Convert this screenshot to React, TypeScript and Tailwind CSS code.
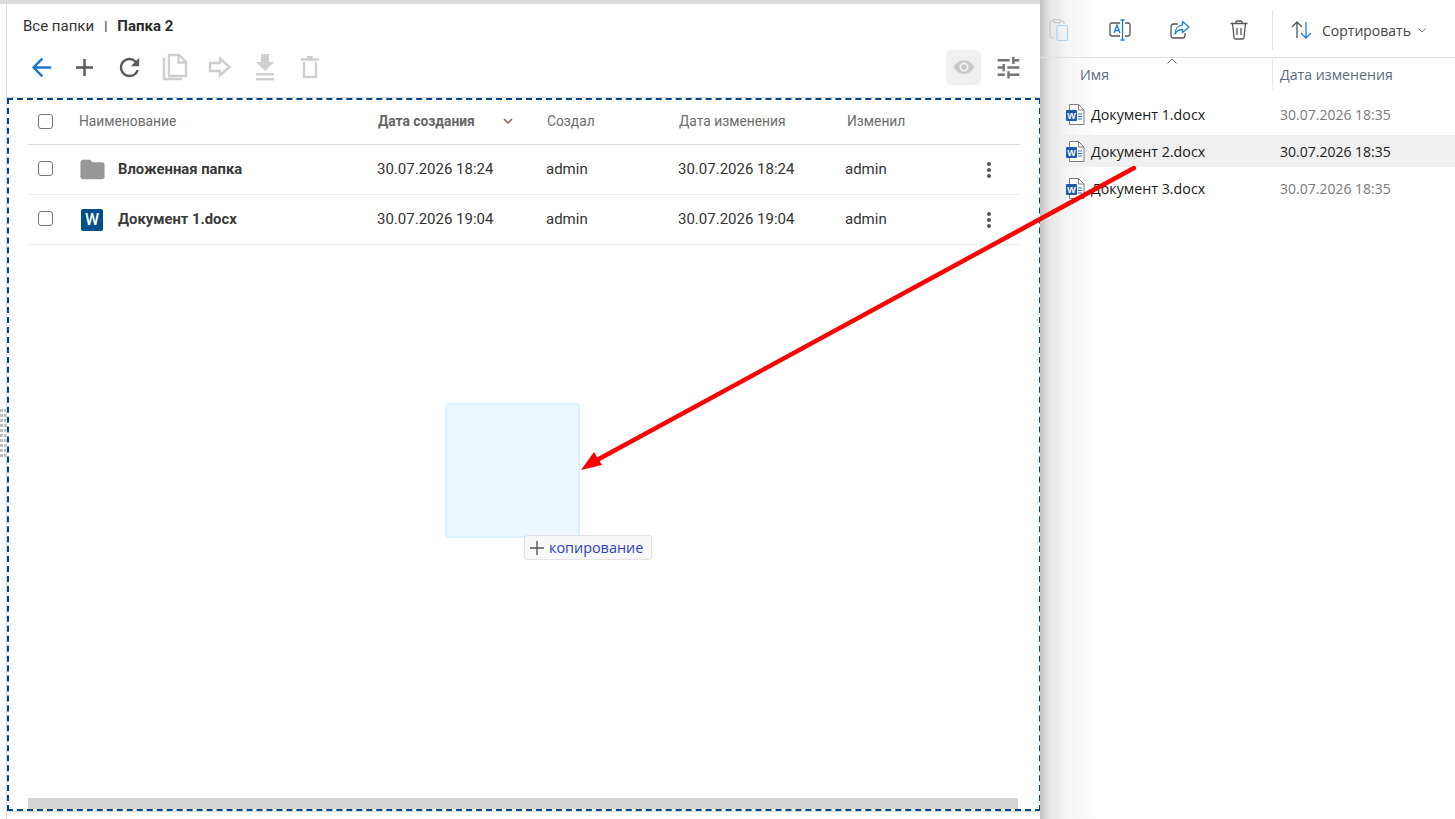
import React from "react";
import { MdArrowBack, MdAdd, MdRefresh, MdVisibility, MdTune, MdMoreVert, MdFolder, MdKeyboardArrowDown } from "react-icons/md";

const left = "font-['Roboto',sans-serif]";
const right = "font-['Open_Sans','Noto_Sans',sans-serif]";

function Check() {
  return <span className="block w-[15px] h-[15px] rounded-[3px] border-[1.5px] border-[#757575] bg-white" />;
}

function CopyIcon() {
  return (
    <svg width="26" height="28" viewBox="0 0 26 28" fill="none" stroke="#cfcfcf" strokeWidth="2.4">
      <path d="M2 5v21h18" />
      <path d="M7 2h10l7 7v14H7z" />
      <path d="M16.5 2v7.5H24" />
    </svg>
  );
}
function ForwardIcon() {
  return (
    <svg width="24" height="22" viewBox="0 0 24 22" fill="none" stroke="#cfcfcf" strokeWidth="2.4">
      <path d="M2 7h10V2.5L21.5 11 12 19.5V15H2z" />
    </svg>
  );
}
function DownloadIcon() {
  return (
    <svg width="20" height="28" viewBox="0 0 20 28" fill="#cfcfcf">
      <path d="M6 1h8v8h5l-9 9-9-9h5z" />
      <rect x="1" y="20" width="18" height="2.4" />
      <rect x="1" y="25" width="18" height="2.4" />
    </svg>
  );
}
function TrashIcon() {
  return (
    <svg width="18" height="23" viewBox="0 0 18 23" fill="none" stroke="#cfcfcf" strokeWidth="2.4">
      <path d="M3 6v15h12V6" />
      <path d="M0 3.5h18M6 1.2h6" />
    </svg>
  );
}
function WordIcon() {
  return (
    <svg width="19" height="21" viewBox="0 0 19 21" fill="none" className="shrink-0">
      <path d="M3.5 .5h9l5.5 5.5v14.5H3.5z" fill="#fff" stroke="#7d7d7d" />
      <path d="M12.5 .5V6H18" stroke="#7d7d7d" />
      <path d="M12 10h4M12 12.5h4M12 15h4" stroke="#2b6cc4" />
      <rect x="0" y="6" width="11" height="11" rx="1" fill="#1f5bb5" />
      <text x="5.5" y="15" fontSize="9" fontWeight="700" textAnchor="middle" fill="#fff" fontFamily="Liberation Sans">W</text>
    </svg>
  );
}
function ClipIcon() {
  return (
    <svg width="20" height="22" viewBox="0 0 20 22" fill="none">
      <path d="M5 19H2.5A1.5 1.5 0 0 1 1 17.5v-14A1.5 1.5 0 0 1 2.5 2H4M12 2h1.5A1.5 1.500 0 0 1 15 3.500V5" stroke="#c8c8c8" strokeWidth="1.2" />
      <rect x="4.5" y=".7" width="7" height="3" rx="1" stroke="#c8c8c8" strokeWidth="1.2" />
      <rect x="8" y="6.5" width="10.5" height="15" rx="1.5" stroke="#a9d3f2" strokeWidth="1.2" />
    </svg>
  );
}
function RenameIcon() {
  return (
    <svg width="22" height="22" viewBox="0 0 22 22" fill="none">
      <path d="M11 4H3a2 2 0 0 0-2 2v9a2 2 0 0 0 2 2h8M16 4h3a2 2 0 0 1 2 2v9a2 2 0 0 1-2 2h-3" stroke="#555" strokeWidth="1.3" />
      <path d="M5 14l3-8 3 8M6 11.5h4" stroke="#1a7fd4" strokeWidth="1.3" />
      <path d="M13.5 1v20M11.5 1h4M11.5 21h4" stroke="#1a7fd4" strokeWidth="1.3" />
    </svg>
  );
}
function ShareIcon() {
  return (
    <svg width="20" height="20" viewBox="0 0 20 20" fill="none">
      <path d="M8 4H3.500A2.500 2.500 0 0 0 1 6.500v9A2.500 2.500 0 0 0 3.500 18h9a2.500 2.500 0 0 0 2.500-2.500V13" stroke="#555" strokeWidth="1.3" />
      <path d="M12.500 1.500 19 7l-6.500 5.500V9.500C9 9.500 6.500 11 5 14c0-5 3-8.500 7.500-8.800z" stroke="#1a7fd4" strokeWidth="1.3" strokeLinejoin="round" />
    </svg>
  );
}
function BinIcon() {
  return (
    <svg width="18" height="20" viewBox="0 0 18 20" fill="none" stroke="#555" strokeWidth="1.3">
      <path d="M.500 3.500h17M6 3.500V2a1 1 0 0 1 1-1h4a1 1 0 0 1 1 1v1.500" />
      <path d="M2.500 3.500 4 17.500a1.500 1.500 0 0 0 1.500 1.500h7a1.500 1.500 0 0 0 1.500-1.500l1.500-14" />
      <path d="M7 8v7M11 8v7" />
    </svg>
  );
}
function SortIcon() {
  return (
    <svg width="21" height="18" viewBox="0 0 21 18" fill="none" strokeWidth="1.3">
      <path d="M6 17V1M1 6l5-5 5 5" stroke="#555" />
      <path d="M15 1v16M10 12l5 5 5-5" stroke="#1a7fd4" />
    </svg>
  );
}

const rows = [
  { icon: "folder", name: "Вложенная папка", created: "30.07.2026 18:24" },
  { icon: "word", name: "Документ 1.docx", created: "30.07.2026 19:04" },
];
const files = ["Документ 1.docx", "Документ 2.docx", "Документ 3.docx"];

export default function App() {
  return (
    <div className="relative flex w-[1455px] h-[819px] overflow-hidden bg-white">
      <div className="w-[6px] shrink-0 flex flex-col justify-center gap-[2px] pt-[47px]">
        {Array.from({ length: 10 }).map((_, i) => (
          <div key={i} className="flex gap-[1px] h-[3px]">
            <span className="w-[3px] bg-[#bdbdbd]" />
            <span className="w-[2px] bg-[#bdbdbd]" />
          </div>
        ))}
      </div>

      <div className={`w-[1034px] shrink-0 flex flex-col ${left}`}>
        <div className="h-[4px] -ml-[6px] bg-[#dcdcdc]" />
        <div className="flex-1 flex flex-col border-l border-[#dcdcdc]">
          <div className="h-[44px] flex items-center pl-[16px] text-[15px] text-[#333]">
            <span>Все папки</span>
            <span className="mx-[10px] text-[13px] text-[#222]">|</span>
            <span className="font-bold text-[#2b2b2b]">Папка 2</span>
          </div>
          <div className="h-[38px] flex items-center pl-[14px] pr-[17px]">
            <div className="w-[41px] flex justify-center"><MdArrowBack size={29} color="#1976d2" /></div>
            <div className="w-[45px] flex justify-center"><MdAdd size={29} color="#5a5a5a" /></div>
            <div className="w-[45px] flex justify-center"><MdRefresh size={29} color="#5a5a5a" /></div>
            <div className="w-[45px] flex justify-center"><CopyIcon /></div>
            <div className="w-[45px] flex justify-center"><ForwardIcon /></div>
            <div className="w-[45px] flex justify-center"><DownloadIcon /></div>
            <div className="w-[45px] flex justify-center"><TrashIcon /></div>
            <div className="ml-auto w-[35px] h-[35px] rounded-md bg-[#f0f0f0] flex items-center justify-center">
              <MdVisibility size={22} color="#c8c8c8" />
            </div>
            <div className="ml-[12px] w-[30px] flex justify-center"><MdTune size={29} color="#757575" /></div>
          </div>

          <div className="mt-[11px] w-[1034px] border-y border-[#dcdcdc]">
            <div className="h-[713px] border-2 border-dashed border-[#00478a] flex flex-col pl-[19px] pr-[19px] text-[15px] text-[#333]">
              <div className="h-[45px] shrink-0 border-b border-[#dcdcdc] grid grid-cols-[51px_299px_169px_132px_168px_1fr] items-center text-[13.8px] text-[#6d6d6d] pb-[2px]">
                <div className="pl-[10px]"><Check /></div>
                <div>Наименование</div>
                <div className="flex items-center font-bold text-[#666]">
                  Дата создания
                  <MdKeyboardArrowDown size={18} color="#8a5a50" className="ml-[24px]" />
                </div>
                <div>Создал</div>
                <div>Дата изменения</div>
                <div>Изменил</div>
              </div>
              {rows.map((r) => (
                <div key={r.name} className="h-[50px] shrink-0 border-b border-[#eeeeee] grid grid-cols-[51px_298px_169px_132px_167px_1fr] items-center">
                  <div className="pl-[10px] -mt-[3px]"><Check /></div>
                  <div className="flex items-center">
                    <div className="w-[39px] flex">
                      {r.icon === "folder" ? (
                        <MdFolder size={29} color="#989898" className="-ml-[1px]" />
                      ) : (
                        <span className="ml-[2px] w-[22px] h-[22px] rounded-[2px] bg-[#00508a] text-white text-[16px] font-medium flex items-center justify-center">W</span>
                      )}
                    </div>
                    <span className="font-bold text-[14.8px] text-[#3a3a3a]">{r.name}</span>
                  </div>
                  <div>{r.created}</div>
                  <div>admin</div>
                  <div>{r.created}</div>
                  <div className="flex items-center justify-between pr-[19px]">
                    admin
                    <MdMoreVert size={24} color="#555" />
                  </div>
                </div>
              ))}
              <div className="mt-auto h-[11px] mr-[2px] bg-[#d4d4d4] shrink-0" />
            </div>
          </div>
        </div>
      </div>

      <div className={`flex-1 flex flex-col bg-[linear-gradient(to_right,#c2c2c2_0,#e6e6e6_10px,#f6f6f6_28px,#ffffff_60px)] ${right}`}>
        <div className="h-[58px] shrink-0 border-b border-[#e0e0e0] flex items-center pt-[3px]">
          <div className="ml-[9px] w-[20px] flex"><ClipIcon /></div>
          <div className="ml-[40px] flex"><RenameIcon /></div>
          <div className="ml-[39px] flex"><ShareIcon /></div>
          <div className="ml-[40px] flex"><BinIcon /></div>
          <div className="ml-[24px] w-px h-[40px] bg-[#e5e5e5]" />
          <div className="ml-[18px] flex"><SortIcon /></div>
          <span className="ml-[10px] text-[14px] text-[#444]">Сортировать</span>
          <svg width="8" height="5" viewBox="0 0 8 5" fill="none" stroke="#777" className="ml-[7px]"><path d="M.500 .500 4 4l3.500-3.500" /></svg>
        </div>
        <div className="relative h-[32px] shrink-0 flex items-center text-[14.2px] text-[#5c6c80]">
          <span className="ml-[40px] w-[192px] pt-[2px]">Имя</span>
          <span className="w-px h-full bg-[#e8e8e8]" />
          <span className="ml-[7px] pt-[2px]">Дата изменения</span>
          <svg width="10" height="6" viewBox="0 0 10 6" fill="none" stroke="#777" className="absolute left-[127px] top-[0px]"><path d="M.500 5.500 5 1l4.500 4.500" /></svg>
        </div>
        <div className="mt-[8px] pl-[21px] flex flex-col gap-[5px] text-[14.25px]">
          {files.map((f, i) => (
            <div key={f} className={`h-[32px] flex items-center pl-[5px] rounded-l-[2px] ${i === 1 ? "bg-[#f0f0f0]" : ""}`}>
              <WordIcon />
              <span className="ml-[6px] w-[189px] pt-[2px] text-[#1a1a1a]">{f}</span>
              <span className={`text-[14px] ${i === 1 ? "text-[#222]" : "text-[#7a7a7a]"}`}>30.07.2026 18:35</span>
            </div>
          ))}
        </div>
      </div>

      <div className="absolute left-[445px] top-[403px] w-[135px] h-[135px] rounded-[4px] bg-[#ebf7fd] border-2 border-[#dbf1fd]" />
      <div className="absolute left-[524px] top-[535px] w-[128px] h-[25px] rounded-[3px] bg-[#f8f8f8] border border-[#e3e3e3] flex items-center pl-[5px]">
        <svg width="14" height="14" viewBox="0 0 14 14" stroke="#555" strokeWidth="1.400"><path d="M7 0v14M0 7h14" /></svg>
        <span className={`ml-[5px] text-[14.4px] text-[#2a3fc4] ${right}`}>копирование</span>
      </div>

      <svg className="absolute left-0 top-0 pointer-events-none" width="1455" height="819" viewBox="0 0 1455 819">
        <line x1="1134" y1="168" x2="597" y2="460" stroke="#ff0000" strokeWidth="4.500" strokeLinecap="round" />
        <polygon points="581,470 594,452 602,465" fill="#ff0000" />
      </svg>
    </div>
  );
}
